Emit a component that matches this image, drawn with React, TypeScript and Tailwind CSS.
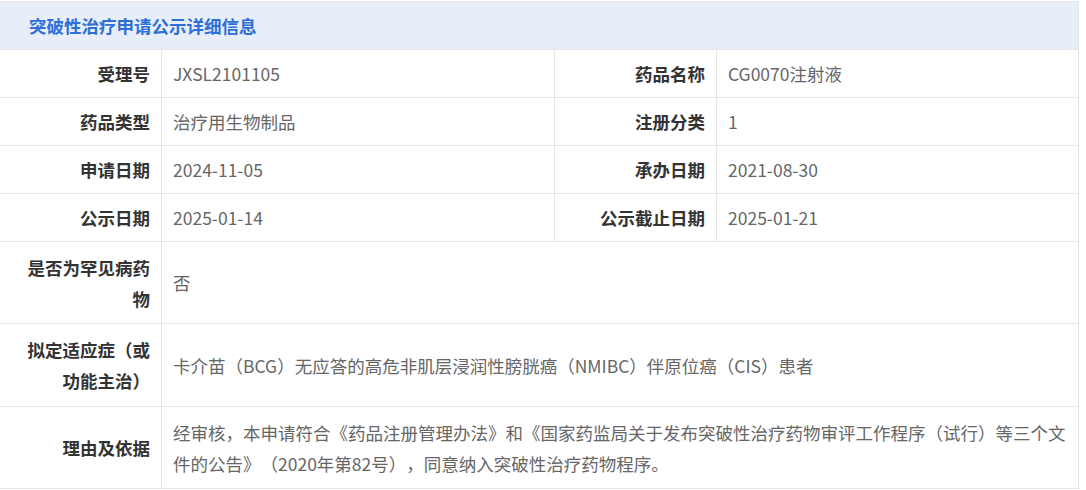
const font = { fontFamily: '"Noto Sans CJK SC", "Noto Sans", sans-serif' };

type Cell = { label: string; value: string };

const pairRows: [Cell, Cell][] = [
  [
    { label: '受理号', value: 'JXSL2101105' },
    { label: '药品名称', value: 'CG0070注射液' },
  ],
  [
    { label: '药品类型', value: '治疗用生物制品' },
    { label: '注册分类', value: '1' },
  ],
  [
    { label: '申请日期', value: '2024-11-05' },
    { label: '承办日期', value: '2021-08-30' },
  ],
  [
    { label: '公示日期', value: '2025-01-14' },
    { label: '公示截止日期', value: '2025-01-21' },
  ],
];

const wideRows = [
  { label: '是否为罕见病药物', value: '否', h: 'h-[82px]' },
  {
    label: '拟定适应症（或功能主治）',
    value: '卡介苗（BCG）无应答的高危非肌层浸润性膀胱癌（NMIBC）伴原位癌（CIS）患者',
    h: 'h-[83px]',
  },
  {
    label: '理由及依据',
    value:
      '经审核，本申请符合《药品注册管理办法》和《国家药监局关于发布突破性治疗药物审评工作程序（试行）等三个文件的公告》（2020年第82号），同意纳入突破性治疗药物程序。',
    h: 'h-[81px]',
  },
];

function Label({ text }: { text: string }) {
  return (
    <div className="w-[162px] shrink-0 self-stretch flex items-center justify-end pl-[11px] pr-[11px] border-r border-[#e6e6e6] text-right font-bold text-[#333333]">
      {text}
    </div>
  );
}

export default function App() {
  return (
    <div className="bg-white w-[1086px] h-[490px] pt-px [text-spacing-trim:space-all]" style={font}>
      <div className="w-[1079px] border-t border-r border-b border-[#e6e6e6] text-[17.5px] leading-[31px]">
        <div className="h-[48px] bg-[#e7eef9] border-b border-[#e6e6e6] flex items-center pl-[29px]">
          <span className="font-bold text-[#2d6ed7]">突破性治疗申请公示详细信息</span>
        </div>

        {pairRows.map(([a, b]) => (
          <div key={a.label} className="h-[48px] flex border-b border-[#e6e6e6]">
            <Label text={a.label} />
            <div className="w-[393px] shrink-0 flex items-center pl-[11px] border-r border-[#e6e6e6] text-[#666666]">
              {a.value}
            </div>
            <Label text={b.label} />
            <div className="flex-1 flex items-center pl-[11px] text-[#666666]">{b.value}</div>
          </div>
        ))}

        {wideRows.map((r, i) => (
          <div
            key={r.label}
            className={`${r.h} flex ${i < wideRows.length - 1 ? 'border-b border-[#e6e6e6]' : ''}`}
          >
            <Label text={r.label} />
            <div className="flex-1 flex items-center px-[11px] text-[#666666]">{r.value}</div>
          </div>
        ))}
      </div>
    </div>
  );
}
